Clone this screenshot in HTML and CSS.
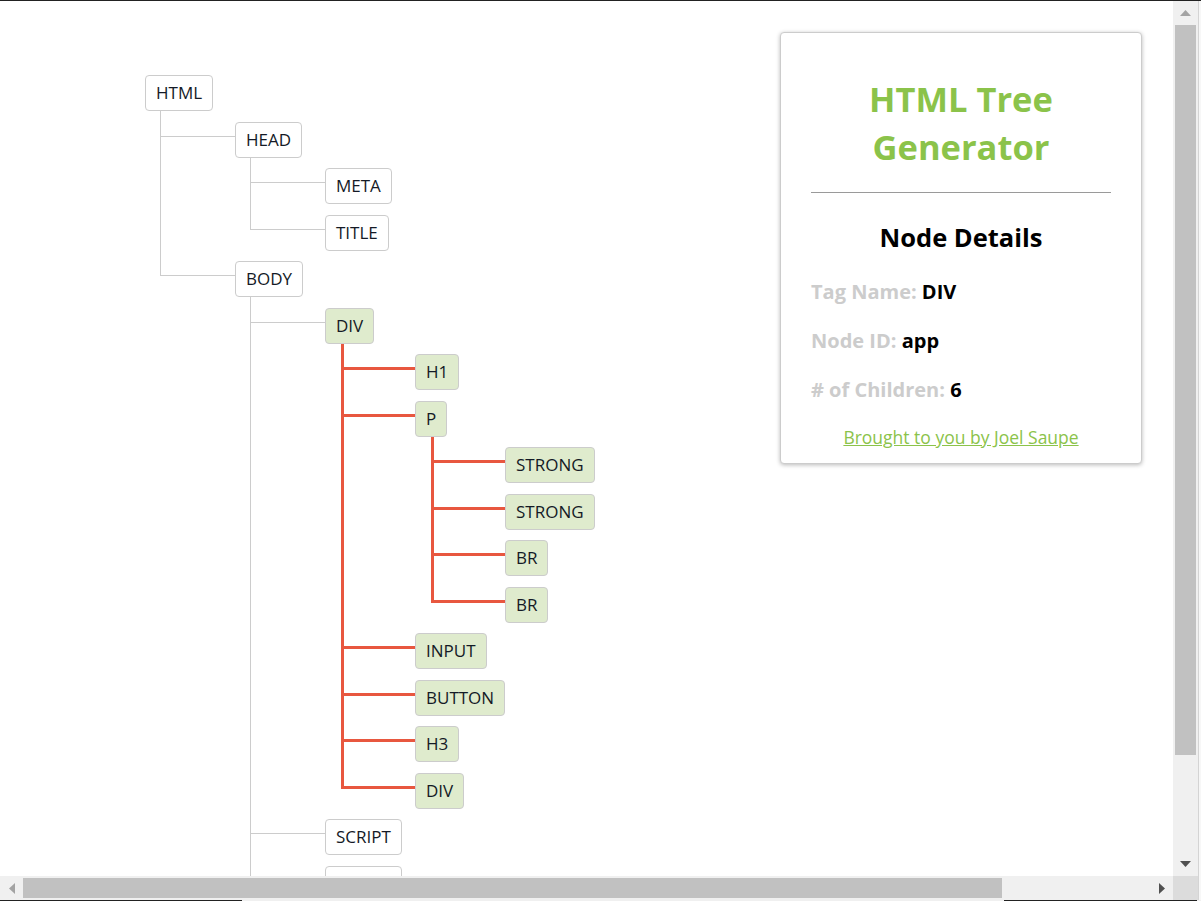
FILE: index.html
```html
<!DOCTYPE html>
<html lang="en">
<head>
<meta charset="utf-8">
<title>HTML Tree Generator</title>
<link rel="stylesheet" href="styles.css">
</head>
<body>
<div class="frame">
  <div class="topline"></div>
  <div class="viewport">
    <div class="page">
      <div class="tree">
        <div class="branch">
          <span class="node">HTML</span>
          <ul class="kids">
            <li><span class="node">HEAD</span>
              <ul class="kids">
                <li><span class="node">META</span></li>
                <li><span class="node">TITLE</span></li>
              </ul>
            </li>
            <li><span class="node">BODY</span>
              <ul class="kids">
                <li><span class="node on">DIV</span>
                  <ul class="kids hot">
                    <li><span class="node on">H1</span></li>
                    <li><span class="node on">P</span>
                      <ul class="kids hot">
                        <li><span class="node on">STRONG</span></li>
                        <li><span class="node on">STRONG</span></li>
                        <li><span class="node on">BR</span></li>
                        <li><span class="node on">BR</span></li>
                      </ul>
                    </li>
                    <li><span class="node on">INPUT</span></li>
                    <li><span class="node on">BUTTON</span></li>
                    <li><span class="node on">H3</span></li>
                    <li><span class="node on">DIV</span></li>
                  </ul>
                </li>
                <li><span class="node">SCRIPT</span></li>
                <li><span class="node">SCRIPT</span></li>
              </ul>
            </li>
          </ul>
        </div>
      </div>
      <aside class="card">
        <h1 class="title">HTML Tree Generator</h1>
        <hr class="rule">
        <h2 class="sub">Node Details</h2>
        <p class="field"><span class="label">Tag Name:</span> DIV</p>
        <p class="field"><span class="label">Node ID:</span> app</p>
        <p class="field"><span class="label"># of Children:</span> 6</p>
        <a class="credit" href="#">Brought to you by Joel Saupe</a>
      </aside>
    </div>
  </div>
  <div class="vscroll">
    <div class="sbtn">
      <svg width="11" height="6" viewBox="0 0 11 6"><polygon points="5.5,0 11,6 0,6" fill="#a3a3a3"/></svg>
    </div>
    <div class="vtrack"><div class="vthumb"></div></div>
    <div class="sbtn">
      <svg width="11" height="6" viewBox="0 0 11 6"><polygon points="0,0 11,0 5.5,6" fill="#505050"/></svg>
    </div>
  </div>
  <div class="edge"></div>
  <div class="hscroll">
    <div class="hbtn">
      <svg width="6" height="11" viewBox="0 0 6 11"><polygon points="6,0 6,11 0,5.5" fill="#a3a3a3"/></svg>
    </div>
    <div class="htrack"><div class="hthumb"></div></div>
    <div class="hbtn">
      <svg width="6" height="11" viewBox="0 0 6 11"><polygon points="0,0 6,5.5 0,11" fill="#505050"/></svg>
    </div>
  </div>
  <div class="corner"></div>
  <div class="bottomline">
    <div class="seg dark a"></div>
    <div class="seg light b"></div>
    <div class="seg dark c"></div>
    <div class="seg light d"></div>
  </div>
</div>
</body>
</html>
```

FILE: styles.css
```css
html, body {
  margin: 0;
  padding: 0;
  background: #fff;
  overflow: hidden;
}

body {
  font-family: "Open Sans", "Noto Sans", sans-serif;
  color: #222;
}

.frame {
  display: grid;
  grid-template-columns: 1173px 25px 3px;
  grid-template-rows: 1px 875px 24px 1px;
  width: 1201px;
  height: 901px;
}

.topline {
  grid-column: 1 / -1;
  grid-row: 1;
  background: #222;
}

.viewport {
  grid-column: 1;
  grid-row: 2;
  overflow: hidden;
  background: #fff;
}

.page {
  display: flex;
  align-items: flex-start;
}

.tree {
  flex: 1;
  margin: 74px 0 0 145px;
}

.branch {
  display: flex;
  flex-direction: column;
  align-items: flex-start;
}

.node {
  box-sizing: border-box;
  display: block;
  height: 36px;
  padding: 0 10px;
  border: 1px solid #cccccc;
  border-radius: 4px;
  background: #fff;
  font-size: 17px;
  line-height: 34px;
  color: #141a26;
  white-space: nowrap;
}

.node.on {
  background: #dfebcd;
}

.kids {
  list-style: none;
  margin: 0;
  padding: 0 0 0 90px;
}

.kids > li {
  position: relative;
  padding-top: 10.5px;
  display: flex;
  flex-direction: column;
  align-items: flex-start;
}

.kids > li::before {
  content: "";
  position: absolute;
  left: -75px;
  top: 24.5px;
  width: 75px;
  height: 1px;
  background: #cccccc;
}

.kids > li::after {
  content: "";
  position: absolute;
  left: -75px;
  top: 0;
  bottom: 0;
  width: 1px;
  background: #cccccc;
}

.kids > li:last-child::after {
  bottom: auto;
  height: 25.5px;
}

.kids.hot > li::before {
  left: -74px;
  top: 23.5px;
  width: 74px;
  height: 3px;
  background: #e8573f;
}

.kids.hot > li::after {
  left: -74px;
  width: 3px;
  background: #e8573f;
}

.kids.hot > li:last-child::after {
  height: 26.5px;
}

/* card */
.card {
  box-sizing: border-box;
  flex: none;
  width: 362px;
  margin: 31px 31px 0 0;
  padding: 0 30px 14px;
  border: 1px solid #cccccc;
  border-radius: 4px;
  box-shadow: 0 1px 4px rgba(0, 0, 0, 0.28);
  background: #fff;
  color: #000;
}

.title {
  margin: 42px 0 0;
  font-size: 34.5px;
  line-height: 48px;
  font-weight: 700;
  color: #8bc34a;
  text-align: center;
}

.rule {
  margin: 21px 0 0;
  height: 0;
  border: 0;
  border-top: 1px solid #9a9a9a;
}

.sub {
  margin: 28px 0 0;
  font-size: 25.5px;
  line-height: 32px;
  font-weight: 700;
  text-align: center;
}

.field {
  margin: 21px 0 0;
  font-size: 20px;
  line-height: 28px;
  font-weight: 700;
}

.sub + .field {
  margin-top: 25px;
}

.label {
  color: #cccccc;
}

.credit {
  display: block;
  margin-top: 21px;
  font-size: 17.5px;
  line-height: 24px;
  text-align: center;
  color: #8bc34a;
  text-decoration: underline;
}

/* scrollbars */
.vscroll {
  grid-column: 2;
  grid-row: 2;
  display: flex;
  flex-direction: column;
  background: #f0f0f0;
}

.sbtn {
  flex: none;
  height: 24px;
  display: flex;
  align-items: center;
  justify-content: center;
}

.vtrack {
  flex: 1;
  padding: 0 2px;
}

.vthumb {
  height: 730px;
  background: #c1c1c1;
}

.edge {
  grid-column: 3;
  grid-row: 2 / 4;
  border-left: 1px solid #d4d4d4;
  background: #f7f7f7;
}

.hscroll {
  grid-column: 1;
  grid-row: 3;
  display: flex;
  background: #f0f0f0;
}

.hbtn {
  flex: none;
  width: 23px;
  display: flex;
  align-items: center;
  justify-content: center;
}

.htrack {
  flex: 1;
  padding: 2px 0;
}

.hthumb {
  width: 979px;
  height: 100%;
  background: #c1c1c1;
}

.corner {
  grid-column: 2;
  grid-row: 3;
  background: #dcdcdc;
}

.bottomline {
  grid-column: 1 / -1;
  grid-row: 4;
  display: flex;
}

.seg.dark { background: #222; }
.seg.light { background: #f0f0f0; }
.seg.a { width: 242px; }
.seg.b { width: 762px; }
.seg.c { width: 193px; }
.seg.d { flex: 1; }
```
